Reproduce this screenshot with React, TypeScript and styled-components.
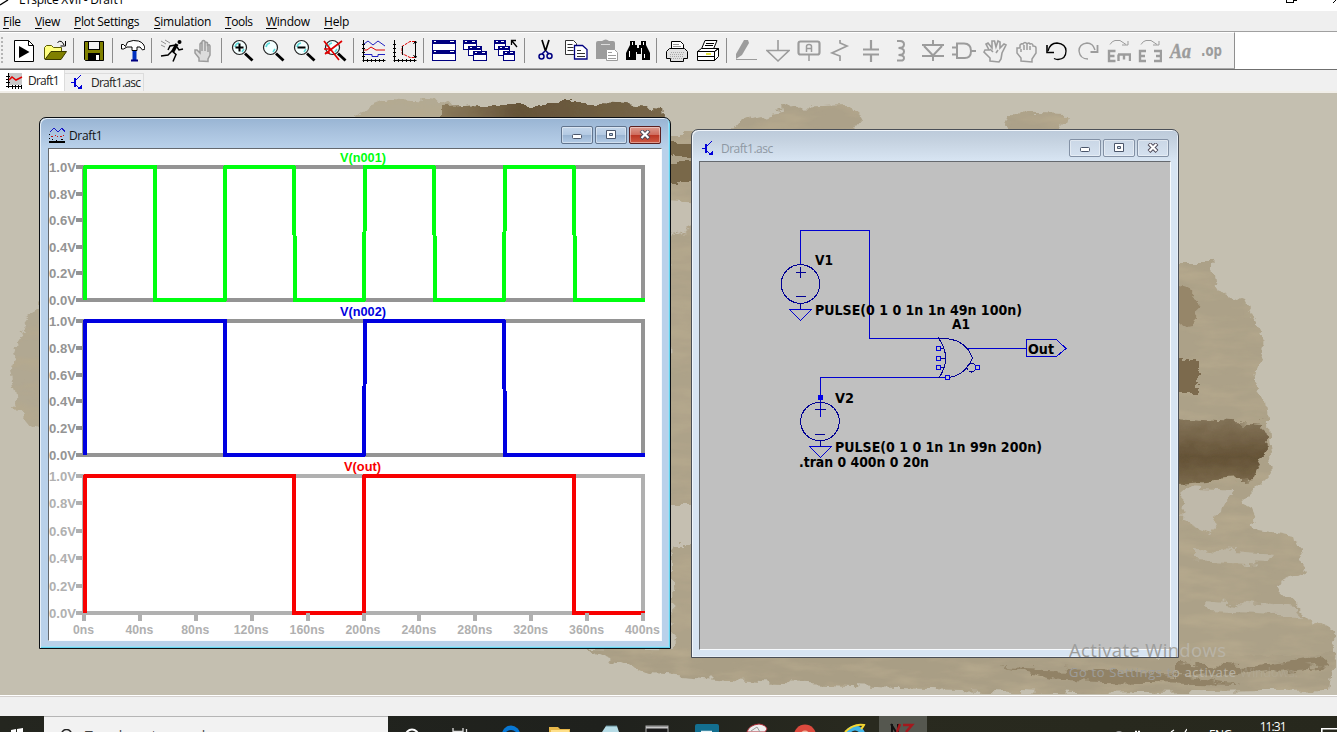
import React from "react";
import styled, { createGlobalStyle } from "styled-components";

const UI = `"Open Sans", "Noto Sans", sans-serif`;

const GlobalStyle = createGlobalStyle`
  * { box-sizing: border-box; }
  html, body { margin: 0; padding: 0; overflow: hidden; }
  body { font-family: ${UI}; font-size: 12px; color: #000; }
  svg { display: block; flex: none; }
`;

const Screen = styled.div`
  width: 1337px;
  height: 732px;
  display: flex;
  flex-direction: column;
  overflow: hidden;
  background: #f0f0f0;
`;

const TitleBar = styled.header`
  height: 11px;
  display: flex;
  justify-content: space-between;
  background: #fff;
  overflow: hidden;
`;
const TitleLeft = styled.div`
  display: flex;
  gap: 8px;
`;
const TitleText = styled.span`
  line-height: 16px;
  margin-top: -8px;
  letter-spacing: -0.28px;
  white-space: nowrap;
`;

const MenuBar = styled.nav`
  height: 20px;
  display: flex;
  align-items: center;
  padding-left: 3px;
  background: #efefef;
`;
const MenuItem = styled.span<{ $w: number; $ls: number }>`
  width: ${(p) => p.$w}px;
  letter-spacing: ${(p) => p.$ls}px;
  line-height: 18px;
  padding-top: 1px;
  white-space: nowrap;
`;
const Key = styled.u`
  text-underline-offset: 2px;
`;

const ToolStrip = styled.div`
  height: 39px;
  display: flex;
  background: #fff;
  border-top: 1px solid #a0a0a0;
  border-bottom: 1px solid #6f6f6f;
`;
const Tools = styled.div`
  width: 1235px;
  display: flex;
  align-items: center;
  padding-left: 1px;
  background: #f0f0f0;
  border-top: 1px solid #fff;
  border-right: 1px solid #8f8f8f;
  border-bottom: 1px solid #a8a8a8;
`;
const Grip = styled.div`
  width: 7px;
  height: 28px;
  background: repeating-linear-gradient(#b4b4b4 0 2px, transparent 2px 4px) no-repeat 0 0 / 2px 100%;
`;
const Tool = styled.div`
  width: 31px;
  height: 30px;
  padding-left: 4px;
  display: flex;
  align-items: center;
`;
const Separator = styled.div`
  width: 8px;
  height: 25px;
  background: linear-gradient(#8c8c8c, #8c8c8c) no-repeat 3px 0 / 1px 100%;
`;

const TabRow = styled.div`
  height: 23px;
  display: flex;
  align-items: flex-start;
  background: #f0f0f0;
  border-bottom: 2px solid #f1eee8;
`;
const Tab = styled.div<{ $active?: boolean; $w: number }>`
  width: ${(p) => p.$w}px;
  height: ${(p) => (p.$active ? 21 : 18)}px;
  margin-top: ${(p) => (p.$active ? 0 : 3)}px;
  padding-left: ${(p) => (p.$active ? 6 : 5)}px;
  display: flex;
  align-items: center;
  gap: ${(p) => (p.$active ? 5 : 7)}px;
  background: ${(p) => (p.$active ? "#fff" : "#f1f1f1")};
  border: solid #dcdcdc;
  border-width: ${(p) => (p.$active ? "0 1px 0 0" : "1px 1px 0 0")};
  letter-spacing: ${(p) => (p.$active ? -0.75 : -0.75)}px;
  white-space: nowrap;
  color: #222;
`;

const Desktop = styled.main`
  position: relative;
  height: 602px;
  background: #c4bfb0;
  overflow: hidden;
`;
const Wallpaper = styled.svg`
  position: absolute;
  inset: 0;
`;

const Frame = styled.section<{ $x: number; $y: number; $w: number; $h: number; $active?: boolean }>`
  position: absolute;
  left: ${(p) => p.$x}px;
  top: ${(p) => p.$y}px;
  width: ${(p) => p.$w}px;
  height: ${(p) => p.$h}px;
  display: flex;
  flex-direction: column;
  padding: ${(p) => (p.$active ? "0 8px 7px 8px" : "0 7px 7px 7px")};
  border: 1px solid ${(p) => (p.$active ? "#0b0f14" : "#4a4f57")};
  border-radius: 7px 7px 0 0;
  background: ${(p) =>
    p.$active
      ? "linear-gradient(#98b4d3 0, #a9c2de 14px, #b9d1ea 30px, #b9d1ea 100%)"
      : "linear-gradient(#bccada 0, #c6d3e1 12px, #d7e4f2 30px, #d7e4f2 100%)"};
  box-shadow: ${(p) =>
    p.$active
      ? "inset 1px 1px 0 #e6eff8, inset -1px -1px 0 #62d2ee, inset -2px -2px 0 #a5dcf2"
      : "inset 1px 1px 0 #f1f6fb, inset -1px -1px 0 #e6eef7"};
`;
const FrameTitle = styled.div<{ $active?: boolean }>`
  height: ${(p) => (p.$active ? 30 : 31)}px;
  display: flex;
  align-items: center;
  padding: ${(p) => (p.$active ? "5px 1px 0 1px" : "6px 2px 0 2px")};
`;
const FrameName = styled.span<{ $active?: boolean }>`
  flex: 1;
  margin-left: 3px;
  letter-spacing: ${(p) => (p.$active ? -0.35 : -0.5)}px;
  color: ${(p) => (p.$active ? "#111" : "#8e98a3")};
`;
const FrameButtons = styled.div`
  display: flex;
  gap: 2px;
  padding-bottom: 1px;
`;
const FrameButton = styled.button<{ $tone: "blue" | "red" | "idle" }>`
  width: 32px;
  height: 18px;
  padding: 0;
  display: flex;
  align-items: center;
  justify-content: center;
  border-radius: 2px;
  border: 1px solid
    ${(p) => (p.$tone === "red" ? "#5b1f20" : p.$tone === "blue" ? "#62758e" : "#8391a5")};
  box-shadow: inset 0 0 0 1px rgba(255, 255, 255, 0.4);
  background: ${(p) =>
    p.$tone === "red"
      ? "linear-gradient(#dc9a8f 0, #cf6d5f 47%, #b93423 50%, #cf5a44 100%)"
      : p.$tone === "blue"
      ? "linear-gradient(#c5d7eb 0, #b4cae3 47%, #98b3d1 50%, #b4cce6 100%)"
      : "linear-gradient(#cad7e6, #d5e1ef)"};
`;
const Client = styled.div<{ $bg: string }>`
  flex: 1;
  overflow: hidden;
  background: ${(p) => p.$bg};
  border: solid;
  border-width: 1px;
  border-color: #65696e #f7fafd #f7fafd #65696e;
`;

const Watermark = styled.aside`
  position: absolute;
  left: 1069px;
  top: 545px;
`;

const StatusBar = styled.footer`
  height: 21px;
  background: #f0f0f0;
  border-top: 1px solid #fff;
  box-shadow: inset 0 1px 0 #d4d0ce;
`;
const Taskbar = styled.div`
  position: relative;
  height: 16px;
  display: flex;
  overflow: hidden;
  background: linear-gradient(90deg, #24261f, #1f211d 45%, #292a1f 65%, #27281d);
`;
const StartButton = styled.div`
  width: 44px;
  padding: 12px 0 0 11px;
`;
const SearchBox = styled.div`
  width: 344px;
  display: flex;
  gap: 12px;
  padding: 12px 0 0 15px;
  background: #f2f2f2;
  border-top: 1px solid #b5b5b5;
  font-size: 14px;
  line-height: 18px;
  letter-spacing: -0.2px;
  white-space: nowrap;
  color: #444;
`;
const SearchLabel = styled.span`
  margin-top: -2px;
`;
const TaskIcons = styled.div`
  width: 539px;
`;
const Tray = styled.div`
  flex: 1;
  display: flex;
  padding-left: 185px;
  color: #fff;
  white-space: nowrap;
`;
const Language = styled.span`
  margin: 11px 28px 0 22px;
  line-height: 16px;
  letter-spacing: -0.6px;
`;
const Clock = styled.span`
  margin-top: 3px;
  width: 61px;
  line-height: 15px;
  letter-spacing: -0.9px;
`;

/* ---------- toolbar icons, each on a 24 x 24 grid ---------- */

const G = "#9c9c9c";
const N = "#000080";

const Lens = ({ children }: { children?: React.ReactNode }) => (
  <>
    <circle cx="9.5" cy="8.5" r="7" fill="#f4ffff" stroke="#222" strokeWidth="1.2" />
    <path d="M5 8a5 5 0 0 1 4-4M12 13l2-3" stroke="#58dada" strokeWidth="1.6" fill="none" />
    <path d="M15 14.5l7.5 7" stroke="#000" strokeWidth="2.8" />
    {children}
  </>
);
const MiniWindow = ({ x, y, w = 13, h = 9 }: { x: number; y: number; w?: number; h?: number }) => (
  <>
    <rect x={x + 0.5} y={y + 0.5} width={w} height={h} fill="#fff" stroke={N} />
    <rect x={x} y={y} width={w + 1} height="4" fill={N} />
    <path d={`M${x + 2} ${y + 1.5}h2M${x + w - 4} ${y + 1.5}h3`} stroke="#fff" />
  </>
);

const icons: Record<string, React.ReactNode> = {
  run: (
    <>
      <path d="M2.5 1.5h14l5 5v16h-19z" fill="#fff" stroke="#000" />
      <path d="M16.5 1.5v5h5" fill="none" stroke="#000" />
      <path d="M7 7v12l10.500-6z" fill="#000" />
    </>
  ),
  open: (
    <>
      <path d="M1.500 20V8.500l2-2h5l2 2h8v4" fill="#ffff80" stroke="#5a5a00" />
      <path d="M2 20.500l6-8h15.500l-5.500 8z" fill="#808000" stroke="#3a3a00" />
      <path d="M14.500 3.500q4-3.500 6.500 2.500M22.500 2v5h-5" fill="none" stroke="#000" />
    </>
  ),
  save: (
    <>
      <path d="M2.500 2.500h19v19h-18l-1-1z" fill="#808000" stroke="#000" />
      <rect x="6.500" y="2.500" width="11" height="8" fill="#f0f0f0" stroke="#000" />
      <rect x="6" y="14" width="12" height="7" fill="#000" />
      <rect x="14" y="16" width="3" height="5" fill="#fff" />
    </>
  ),
  hammer: (
    <>
      <path d="M.5 5.500h2l2 2 2-4.500q6-2.500 11-1 6 2 6.500 8l-2.500 1-2.500-3h-3v3.500h-5V8H6l-3.500 2h-2z" fill="#fff" stroke="#000" />
      <path d="M13.500 12v10" stroke="#0030c0" strokeWidth="4" />
      <path d="M10 21.500h7" stroke="#000080" strokeWidth="2" />
    </>
  ),
  runner: (
    <>
      <circle cx="19.500" cy="3" r="2" fill="#000" />
      <path d="M12 12l4 3.500-3 7M12 12l-4 4-7 1M16 6l-6 1-2 4M17 8l2 3 4-1" fill="none" stroke="#000" strokeWidth="1.500" />
      <path d="M17 5l-4.500 8" stroke="#000" strokeWidth="3.500" />
      <path d="M1 2l5 3M1 6l4 2M5 1l5 3" stroke="#909090" />
    </>
  ),
  halt: (
    <path
      d="M8 22v-3l-4-5v-3h2l3 3V5q1-2 2 0V2.500q1.500-2 3 0V4q1.500-1.500 2.500 0v2q2-1 2.500 1v9l-2 4v2.500zM11 5v7M14 4v8M17 6v7"
      fill="#dcdcdc"
      stroke={G}
      strokeWidth="1.500"
    />
  ),
  zoomIn: <Lens><path d="M5.500 8.500h8M9.500 4.500v8" stroke="#000" strokeWidth="2" /></Lens>,
  pan: <Lens />,
  zoomOut: <Lens><path d="M5.500 8.500h8" stroke="#000" strokeWidth="2" /></Lens>,
  zoomFit: <Lens><path d="M1 2l15 19M19 2L2 15M1 10h8M2 14l5 0" stroke="#e00000" strokeWidth="1.700" /></Lens>,
  autorange: (
    <>
      <path d="M1.500 1v22M.5 21.500h23M5.500 20v3M9.500 20v3M13.500 20v3M17.500 20v3M21.500 20v3M0 5.500h3M0 9.500h3M0 13.500h3M0 17.500h3" stroke="#000" />
      <path d="M2 5l4-3 5 4 5-4 7 5" fill="none" stroke="#2020c0" />
      <path d="M2 11h3l4-3 5 3h9" fill="none" stroke="#e00000" />
      <path d="M2 15.500h8v2h6v-2h7" fill="none" stroke="#2020c0" />
    </>
  ),
  plotRange: (
    <>
      <path d="M1.500 1v22M.5 21.500h23M5.500 20v3M9.500 20v3M13.500 20v3M17.500 20v3M21.500 20v3M0 5.500h3M0 9.500h3M0 13.500h3M0 17.500h3" stroke="#000" />
      <path d="M22 2.500h-5l-8 5v7l8 4h5" fill="none" stroke="#e00000" strokeDasharray="3 1" />
      <path d="M22.500 2v17M20.500 5l2-3 1 2M20.500 16l2 3 1-2M9.500 7v9" fill="none" stroke="#000" />
    </>
  ),
  tile: (
    <>
      <rect x=".5" y="1.500" width="23" height="20" fill="#fff" stroke={N} />
      <path d="M0 3h24M0 13h24" stroke={N} strokeWidth="4" />
      <path d="M2 2.500h2M18 2.500h4M2 12.500h2M18 12.500h4" stroke="#fff" />
    </>
  ),
  cascade: <><MiniWindow x={0} y={1} /><MiniWindow x={5} y={7} /><MiniWindow x={10} y={12} /></>,
  closeAll: (
    <>
      <MiniWindow x={0} y={1} w={11} />
      <MiniWindow x={4} y={7} w={11} />
      <MiniWindow x={9} y={12} w={11} />
      <path d="M23 8l-5-6M17.500 6V1.500H22" fill="none" stroke="#000" strokeWidth="1.300" />
    </>
  ),
  cut: (
    <>
      <path d="M9 1l3.500 11M16 1l-3.500 11" stroke="#000" strokeWidth="1.700" />
      <path d="M12 12l-3 3M13 12l3 3" stroke={N} strokeWidth="1.500" />
      <circle cx="8.500" cy="17.500" r="2.500" fill="none" stroke={N} strokeWidth="1.500" />
      <circle cx="16.500" cy="17" r="2.500" fill="none" stroke={N} strokeWidth="1.500" />
    </>
  ),
  copy: (
    <>
      <path d="M1.500 1.500h8l3 3v11h-11z" fill="#fff" stroke="#333" />
      <path d="M3.500 5.500h5M3.500 8.500h6M3.500 11.500h6" stroke="#333" />
      <path d="M10.500 6.500h8l4.500 4v9.500h-12.500z" fill="#fff" stroke={N} strokeWidth="1.300" />
      <path d="M13 11.500h4M13 14.500h8M13 17.500h8" stroke="#333" />
    </>
  ),
  paste: (
    <>
      <path d="M1 4q0-2 2-2h4q4-3 7 0h4q2 0 2 2v16H1z" fill={G} />
      <path d="M6 5.500h9" stroke="#ddd" />
      <path d="M11.500 10.500h8l3 3v8h-11z" fill="#fff" stroke={G} />
      <path d="M13 13.500h4M13 16.500h8M13 19.500h8" stroke={G} />
    </>
  ),
  find: (
    <>
      <path d="M4 2h5v4h2v3h2V6h2V2h5v4l4 8v7h-8v-8h-1v2h-4v-2h-1v8H0v-7l4-8z" fill="#000" />
      <path d="M6.500 3v3M17.500 3v3M3.500 12v6M15.500 9v4M18.500 15v4" stroke="#fff" />
    </>
  ),
  print: (
    <>
      <path d="M6.500 9V2.500h9l3 3V9" fill="#fff" stroke="#000" />
      <path d="M4.500 9.500h15l3 3v7h-4v3h-13v-3h-4v-7z" fill="#e2e2e2" stroke="#000" />
      <path d="M6 13.500h13M5 15.500h14M5 17.500h14M6 19.500h12" stroke="#aaa" strokeDasharray="1 1" />
      <path d="M8 5.500h6M8 7.500h8" stroke="#999" />
    </>
  ),
  printSetup: (
    <>
      <path d="M5.500 10l3.500-8.500h12L17.500 10" fill="#fff" stroke="#000" />
      <path d="M10 4.500h8M9 6.500h8" stroke="#000" />
      <path d="M1.500 12.500l4-3h17l-4 3zM1.500 12.500v9h17v-9zM18.500 12.500l4-3v8l-4 4z" fill="#fff" stroke="#000" />
      <path d="M1 17.500h17" stroke="#000" />
      <path d="M10 15h5" stroke="#d8d800" strokeWidth="1.500" />
    </>
  ),
  wire: (
    <>
      <path d="M1 20v-5L9 1h4l1 3-7 12z" fill={G} />
      <path d="M1 20.500h21" stroke={G} />
    </>
  ),
  ground: <path d="M12 1v11M1 11.500h22L12 22z" fill="none" stroke={G} strokeWidth="1.600" />,
  label: (
    <>
      <rect x="1.500" y="2.500" width="21" height="13" rx="2" fill="none" stroke={G} strokeWidth="2.200" />
      <path d="M12 16v6M9.500 13V7.500q0-2 2.500-2t2.500 2V13M9.500 9.500h5" fill="none" stroke={G} strokeWidth="1.500" />
    </>
  ),
  resistor: <path d="M12 1v3l7 3-15 7 8 3v5" fill="none" stroke={G} strokeWidth="1.700" />,
  capacitor: <path d="M12 1v9M4 10.500h16M4 15.500h16M12 15v8" fill="none" stroke={G} strokeWidth="2.200" />,
  inductor: <path d="M7 2h3q4 0 4 3.500T8.500 9q5.500 0 5.500 3.500T8.500 16q5.500 0 5.500 3t-4 2.500H7" fill="none" stroke={G} strokeWidth="2" />,
  diode: <path d="M12 1v5M1 6h22M3 7l9 9.500 9-9.500M1 17h22M12 17v5" fill="none" stroke={G} strokeWidth="2" />,
  component: (
    <path d="M5 4.500h7q7 0 7 7.500t-7 7H5zM0 8.500h5M0 15.500h5M19 12h5" fill="none" stroke={G} strokeWidth="2" />
  ),
  move: (
    <path
      d="M7 22v-3l-6-6 1-2h4L3 5l2-1 4 5V2h2.500l1.500 6 2-6 2 1v6l4-4 2 1-4 8-1 6-2 3zM7 10l3 3M15 11l-2 3"
      fill="none"
      stroke={G}
      strokeWidth="1.600"
    />
  ),
  drag: (
    <path
      d="M7 22v-3l-4-5V9h3V6q2-2 3-1 2-3 4 0 2-2 3 0 3-1 3 2 3 0 3 2v5l-4 6v3zM7 10v3M10 6v5M13 5v6M16 7v4"
      fill="none"
      stroke={G}
      strokeWidth="1.500"
    />
  ),
  undo: (
    <>
      <path d="M3 12q2-8 9-8 9 1 9 8 0 8-8 8.500-2 0-4-1" fill="none" stroke="#000" strokeWidth="1.300" />
      <path d="M2 6v7.500h7" fill="none" stroke="#000" strokeWidth="1.600" />
    </>
  ),
  redo: (
    <>
      <path d="M19 11q-2-7-8-7-8 1-8 8 1 8 9 8" fill="none" stroke={G} strokeWidth="1.400" />
      <path d="M21.500 6v7h-7" fill="none" stroke={G} strokeWidth="1.800" />
    </>
  ),
  rotate: (
    <>
      <path d="M8.500 12H2V22h6.500M2 17h5.500M11 15.500H23V22M17 15.500v5M11.500 15.500V22" fill="none" stroke={G} strokeWidth="2.400" />
      <path d="M3 5.500q2-3.500 5-4h5l6 4M15 6h6V2" fill="none" stroke={G} />
    </>
  ),
  mirror: (
    <>
      <path d="M8 12H2V22h6M2 17h5M16 12h7V22h-7M23 17h-5" fill="none" stroke={G} strokeWidth="2.400" />
      <path d="M3 5.500q2-3.500 5-4h5l6 4M15 6h6V2" fill="none" stroke={G} />
    </>
  ),
  text: (
    <text
      x="1"
      y="19"
      textLength="21"
      lengthAdjust="spacingAndGlyphs"
      fontFamily="Liberation Serif, serif"
      fontSize="20"
      fontStyle="italic"
      fontWeight="bold"
      fill={G}
      stroke={G}
      strokeWidth=".4"
    >
      Aa
    </text>
  ),
  directive: (
    <text x="1" y="17" textLength="21" lengthAdjust="spacingAndGlyphs" fontFamily="DejaVu Sans, sans-serif" fontSize="15" fontWeight="bold" fill={G}>
      .op
    </text>
  ),
};

const toolOrder =
  "run open | save | hammer | runner halt | zoomIn pan zoomOut zoomFit | autorange plotRange | tile cascade closeAll | cut copy paste find | print printSetup | wire ground label resistor capacitor inductor diode component move drag undo redo rotate mirror text directive".split(
    " "
  );

const menu: [string, number, number][] = [
  ["File", 32, -0.3],
  ["View", 39, -0.3],
  ["Plot Settings", 80, -0.32],
  ["Simulation", 71, -0.25],
  ["Tools", 41, -0.45],
  ["Window", 58, -0.25],
  ["Help", 40, -0.2],
];

const WaveIcon = () => (
  <svg width="17" height="16" viewBox="0 0 17 16">
    <rect x="3" y="0" width="13" height="12" fill="#c8c8c8" />
    <path d="M2.500 0v15M0 13.500h16M0 3.500h4M0 6.500h4M0 9.500h4M6.500 12v4M9.500 12v4M12.500 12v4M15.500 12v4" stroke="#000" />
    <path d="M3 7l3-3 4 3 6-3" fill="none" stroke="#e00000" strokeWidth="1.500" />
  </svg>
);
const PlotIcon = () => (
  <svg width="17" height="16" viewBox="0 0 17 16" shapeRendering="crispEdges">
    <path d="M1 4l4-4 4 4 4-4 3 4" fill="none" stroke="#1818c8" />
    <path d="M2 8.500h2M6 7.500h1M8 8.500h1M11 8.500h2M14 7.500h1" fill="none" stroke="#d01010" strokeWidth="1.500" />
    <path d="M0 6.500h1M0 10.500h1M3 11.500h1M7 12.500h1M12 11.500h2" stroke="#000" />
    <path d="M0 14h16" stroke="#000" strokeWidth="2" />
  </svg>
);
const TransistorIcon = () => (
  <svg width="12" height="16" viewBox="0 0 12 16" shapeRendering="crispEdges">
    <path d="M0 7.500h4M4 6l6-6M4 9l5 5" stroke="#0000d8" fill="none" />
    <path d="M4 3v9" stroke="#0000d8" strokeWidth="2" />
    <path d="M6 14h5v-4z" fill="#0000d8" />
  </svg>
);

const MinimizeGlyph = () => (
  <svg width="12" height="10" viewBox="0 0 12 10">
    <rect x="1.500" y="4.500" width="9" height="4" rx="1" fill="#fff" stroke="#4b566b" />
  </svg>
);
const MaximizeGlyph = () => (
  <svg width="12" height="10" viewBox="0 0 12 10">
    <path d="M1.500 .5h9v8H1.500zM4.500 3.500v2h3v-2z" fill="#fff" fillRule="evenodd" stroke="#4b566b" />
  </svg>
);
const CloseGlyph = () => (
  <svg width="12" height="10" viewBox="0 0 12 10">
    <path d="M2 .5l8 8M10 .5l-8 8" stroke="#4b4656" strokeWidth="4" />
    <path d="M2.500 1l7 7M9.500 1l-7 7" stroke="#fff" strokeWidth="2.200" />
  </svg>
);

/* ---------- waveform panes ---------- */

type Pane = {
  name: string;
  nameX: number;
  nameW: number;
  levels: number[];
  color: string;
  axis: string;
  trace: string;
};
const panes: Pane[] = [
  {
    name: "V(n001)",
    nameX: 340,
    nameW: 46,
    levels: [167, 194, 220, 247, 273, 300],
    color: "#00ff10",
    axis: "#949494",
    trace: "M85 300V167H155V300H225V167H294L295 300H364L365 167H434L435 300H504L505 167H574L575 300H645",
  },
  {
    name: "V(n002)",
    nameX: 340,
    nameW: 46,
    levels: [321, 348, 375, 401, 428, 455],
    color: "#0000e0",
    axis: "#949494",
    trace: "M85 455V321H225V455H364L365 321H504L505 455H645",
  },
  {
    name: "V(out)",
    nameX: 344,
    nameW: 37,
    levels: [476, 503, 531, 558, 586, 613],
    color: "#f80000",
    axis: "#b0b0b0",
    trace: "M85 613V476H294V613H364V476H574V613H645",
  },
];

const Waveforms = () => (
  <svg width="613" height="491" viewBox="49 149 613 491" fontFamily="Liberation Sans, Arial, sans-serif" fontWeight="bold" fontSize="13.500">
    {panes.map((p) => (
      <g key={p.name}>
        <g stroke={p.axis} strokeWidth="4" shapeRendering="crispEdges" fill="none">
          <rect x="84" y={p.levels[0]} width="559" height={p.levels[5] - p.levels[0]} />
          {p.levels.map((y) => (
            <path key={y} d={`M76 ${y}H84`} />
          ))}
        </g>
        {p.levels.map((y, i) => (
          <text key={y} x="49" y={y + 5} textLength="27" lengthAdjust="spacingAndGlyphs" fill={p.axis}>
            {(1 - i * 0.2).toFixed(1)}V
          </text>
        ))}
        <path d={p.trace} fill="none" stroke={p.color} strokeWidth="4" strokeLinejoin="round" shapeRendering="crispEdges" />
        <text x={p.nameX} y={p.levels[0] - 5} textLength={p.nameW} lengthAdjust="spacingAndGlyphs" fill={p.color}>
          {p.name}
        </text>
      </g>
    ))}
    {Array.from({ length: 11 }, (_, i) => (
      <g key={i} fill="#b0b0b0">
        <rect x={82 + i * 55.9} y="613" width="4" height="8" shapeRendering="crispEdges" />
        <text
          x={83.500 + i * 55.9}
          y="634"
          textAnchor="middle"
          textLength={i === 0 ? 21 : i < 3 ? 28 : 35}
          lengthAdjust="spacingAndGlyphs"
        >
          {i * 40}ns
        </text>
      </g>
    ))}
  </svg>
);

/* ---------- schematic ---------- */

const Label = ({ x, y, w, children }: { x: number; y: number; w: number; children: string }) => (
  <text x={x} y={y} textLength={w} lengthAdjust="spacingAndGlyphs">
    {children}
  </text>
);
const Pin = ({ x, y }: { x: number; y: number }) => (
  <rect x={x - 2} y={y - 2} width="4" height="4" fill="#c0c0c0" stroke="#0000e0" shapeRendering="crispEdges" />
);

const Schematic = () => (
  <svg
    width="469"
    height="487"
    viewBox="700 162 469 487"
    fontFamily="DejaVu Sans Condensed, DejaVu Sans, sans-serif"
    fontSize="14"
    fontWeight="bold"
  >
    <g fill="none" stroke="#0000d0" shapeRendering="crispEdges">
      <path d="M800.500 264V230.500H869.500V338.500H940M820.500 417V377.500H948M966 348.500H1026" />
      <path d="M789.500 309.500H811.500L800.500 320.500zM809.500 446.500H831.500L820.500 457.500z" />
      <path d="M1026.500 339.500H1056.500L1066 348.500L1056.500 356.500H1026.500z" />
    </g>
    <g fill="none" stroke="#000094" shapeRendering="crispEdges">
      <circle cx="800.500" cy="284" r="19.300" />
      <circle cx="820" cy="421.500" r="19.300" />
      <path d="M796 272.500h10M800.500 267v11M795.500 296.500h10M800.500 303v6M815 409.500h11M815 434.500h10M820.500 441v6" />
      <path d="M938 337.500Q953 358 938.500 378.500M938 338.500C955 337.500 967 343 972.500 358C967 371 959 376 949 377.500" />
      <circle cx="971.500" cy="367.500" r="4.500" />
      <path d="M940 348.500h4M940 358.500h6M940 367.500h4" />
    </g>
    <Pin x={938.500} y={348.500} />
    <Pin x={938.500} y={358.500} />
    <Pin x={938.500} y={367.500} />
    <Pin x={947.500} y={377.500} />
    <Pin x={977.500} y={367.500} />
    <rect x="818" y="395" width="5" height="5" fill="#0000e8" />
    <Label x={815} y={265} w={18}>V1</Label>
    <Label x={815} y={315} w={207}>PULSE(0 1 0 1n 1n 49n 100n)</Label>
    <Label x={952} y={329} w={18}>A1</Label>
    <Label x={1028} y={354} w={26}>Out</Label>
    <Label x={835} y={403} w={19}>V2</Label>
    <Label x={835} y={452} w={207}>PULSE(0 1 0 1n 1n 99n 200n)</Label>
    <Label x={799} y={467} w={130}>.tran 0 400n 0 20n</Label>
  </svg>
);

/* ---------- painted desktop picture ---------- */

const Painting = () => (
  <Wallpaper width="1337" height="602" viewBox="0 93 1337 602">
    <defs>
      <filter id="rough" x="-5%" y="-5%" width="110%" height="110%">
        <feTurbulence type="fractalNoise" baseFrequency="0.05 0.09" numOctaves="4" seed="8" />
        <feDisplacementMap in="SourceGraphic" scale="16" xChannelSelector="R" yChannelSelector="G" />
      </filter>
      <filter id="bristle" x="0" y="0" width="100%" height="100%">
        <feTurbulence type="fractalNoise" baseFrequency="0.02 0.07" numOctaves="4" seed="3" result="n" />
        <feColorMatrix in="n" values="0 0 0 0 .47  0 0 0 0 .40  0 0 0 0 .27  0 2 0 0 -.78" result="c" />
        <feComposite in="c" in2="SourceAlpha" operator="in" result="t" />
        <feMerge><feMergeNode in="SourceGraphic" /><feMergeNode in="t" /></feMerge>
      </filter>
      <linearGradient id="umber" x1="0" x2="1">
        <stop offset="0" stopColor="#8c7b5c" /><stop offset=".35" stopColor="#655338" /><stop offset="1" stopColor="#776648" />
      </linearGradient>
      <linearGradient id="shade" x1="0" x2="0" y1="0" y2="1">
        <stop offset="0" stopColor="#85755a" /><stop offset=".6" stopColor="#645236" /><stop offset="1" stopColor="#7b6a4c" />
      </linearGradient>
    </defs>
    <g filter="url(#bristle)">
      <g filter="url(#rough)">
        <path d="M348 122L372 105L390 98L450 103L440 122z" fill="#b3aa93" />
        <path d="M46 295L22 330L10 365L16 405L32 425L46 432z" fill="#b1a892" />
        <path d="M728 135L744 118L790 108L854 106L862 120L850 135zM1000 134L1008 113L1064 115L1058 134z" fill="#aca189" />
        <path d="M666 135H700V660H672z" fill="#ada289" />
        <path d="M1174 262L1212 262L1216 290L1244 300L1266 345L1252 382L1266 400L1272 470L1244 498L1258 530L1296 536L1304 570L1274 585L1308 618L1334 632L1336 672L1174 690z" fill="#aca188" />
        <path d="M585 648L700 650L1180 655L1335 655L1330 690L1080 694L900 688L760 682L650 674z" fill="#a99e85" />
      </g>
    </g>
    <g filter="url(#rough)">
      <path d="M442 105L480 103L600 103L662 108L664 126H442z" fill="url(#umber)" />
      <path d="M666 144H700V156H666zM666 161H700V181H666z" fill="#79674a" />
      <path d="M664 200L704 202V220L666 240z" fill="#c5bfb1" />
      <path d="M664 502H706V544H664z" fill="#c5bfb1" />
      <path d="M1174 418L1264 424L1266 450L1254 478L1176 484z" fill="url(#shade)" />
      <path d="M1172 358H1199V394H1172z" fill="#7c6b4d" />
      <path d="M1172 285Q1204 285 1194 322L1172 326z" fill="#968669" />
      <path d="M1184 487L1234 490L1209 532L1182 520z" fill="#bfb9aa" />
      <path d="M1194 548L1274 554L1266 564L1194 560zM1204 600L1294 608L1300 616L1210 612z" fill="#bcb5a3" />
      <path d="M1176 663L1240 667L1322 658L1326 666L1240 675L1176 674zM1000 667L1180 675L1240 684L1060 680z" fill="#918266" />
    </g>
  </Wallpaper>
);

const TaskbarIcons = () => (
  <svg width="539" height="16" viewBox="388 716 539 16">
    <rect x="879" y="716" width="48" height="16" fill="#55574f" />
    <circle cx="412" cy="736" r="6.500" fill="none" stroke="#fff" strokeWidth="2" />
    <path d="M453 728v3.500h10V728M466.500 729v3" fill="none" stroke="#ddd" strokeWidth="1.300" />
    <circle cx="511" cy="734.500" r="9" fill="#0878d4" />
    <path d="M506 732q5-4 10 0z" fill="#17232c" />
    <path d="M549 732v-5h9l2 2h10v3z" fill="#e8b84a" />
    <path d="M551 732v-2h18v2z" fill="#ffe08a" />
    <path d="M602 732l4-6h11l2 6z" fill="#b6dce6" />
    <path d="M606 726h11" stroke="#5e8791" />
    <rect x="646" y="726" width="22" height="8" fill="#1a1a1a" stroke="#a8a8a8" />
    <path d="M646 727.500h22" stroke="#c8c8c8" strokeWidth="2" />
    <rect x="695" y="724" width="24" height="12" rx="2" fill="#136f90" />
    <path d="M701 731.500h11" stroke="#e6f2f6" strokeWidth="1.500" />
    <path d="M747 732q2-7 12-8 7 1 8 5l-2 3z" fill="#eee" stroke="#b2323c" />
    <path d="M751 731l6-4 3 5" fill="none" stroke="#999" />
    <circle cx="805" cy="735.500" r="11" fill="#dc4a3e" />
    <circle cx="805" cy="735" r="4.500" fill="#f3b7a0" />
    <circle cx="855" cy="736" r="8" fill="none" stroke="#43b6e8" strokeWidth="5" />
    <path d="M845 732q9-9 19-7-1 2-3 4" fill="none" stroke="#f5d631" strokeWidth="2" />
    <path d="M891 724l5 8M892 724v8M898 724v8" stroke="#111" strokeWidth="2" />
    <path d="M900 724l-3 8M903 725h9l-6 7" fill="none" stroke="#a3181d" strokeWidth="2.500" />
  </svg>
);

export default function App() {
  return (
    <>
      <GlobalStyle />
      <Screen>
        <TitleBar>
          <TitleLeft>
            <svg width="11" height="8" viewBox="0 0 11 8">
              <path d="M0 5L8 0" stroke="#000" strokeWidth="1.400" />
            </svg>
            <TitleText>LTspice XVII - Draft1</TitleText>
          </TitleLeft>
          <svg width="51" height="8" viewBox="1286 0 51 8" shapeRendering="crispEdges">
            <path d="M1286.500 0V2.500H1293.500V0M1294 .5H1296V0" fill="none" stroke="#000" />
            <path d="M1333 3l4-4" stroke="#000" />
          </svg>
        </TitleBar>
        <MenuBar>
          {menu.map(([t, w, ls]) => (
            <MenuItem key={t} $w={w} $ls={ls}>
              <Key>{t[0]}</Key>
              {t.slice(1)}
            </MenuItem>
          ))}
        </MenuBar>
        <ToolStrip>
          <Tools>
            <Grip />
            {toolOrder.map((name, i) =>
              name === "|" ? (
                <Separator key={i} />
              ) : (
                <Tool key={i}>
                  <svg width="24" height="24" viewBox="0 0 24 24" fill="none">
                    {icons[name]}
                  </svg>
                </Tool>
              )
            )}
          </Tools>
        </ToolStrip>
        <TabRow>
          <Tab $active $w={65}>
            <WaveIcon />
            Draft1
          </Tab>
          <Tab $w={79}>
            <svg width="14" height="16" viewBox="-1 0 14 16">
              <TransistorIcon />
            </svg>
            Draft1.asc
          </Tab>
        </TabRow>
        <Desktop>
          <Painting />
          <Frame $active $x={39} $y={24} $w={632} $h={532}>
            <FrameTitle $active>
              <PlotIcon />
              <FrameName $active>Draft1</FrameName>
              <FrameButtons>
                <FrameButton $tone="blue"><MinimizeGlyph /></FrameButton>
                <FrameButton $tone="blue"><MaximizeGlyph /></FrameButton>
                <FrameButton $tone="red"><CloseGlyph /></FrameButton>
              </FrameButtons>
            </FrameTitle>
            <Client $bg="#fff">
              <Waveforms />
            </Client>
          </Frame>
          <Frame $x={691} $y={36} $w={488} $h={529}>
            <FrameTitle>
              <svg width="17" height="16" viewBox="-1 0 17 16">
                <TransistorIcon />
              </svg>
              <FrameName>Draft1.asc</FrameName>
              <FrameButtons>
                <FrameButton $tone="idle"><MinimizeGlyph /></FrameButton>
                <FrameButton $tone="idle"><MaximizeGlyph /></FrameButton>
                <FrameButton $tone="idle"><CloseGlyph /></FrameButton>
              </FrameButtons>
            </FrameTitle>
            <Client $bg="#c0c0c0">
              <Schematic />
            </Client>
          </Frame>
          <Watermark>
            <svg width="260" height="46">
              <defs>
                <linearGradient id="fade" gradientUnits="userSpaceOnUse" x1="0" x2="240" y1="0" y2="0">
                  <stop offset="0" stopColor="#9d9d9b" />
                  <stop offset=".42" stopColor="#9d9d9b" />
                  <stop offset=".46" stopColor="#bab5a9" />
                  <stop offset="1" stopColor="#b5af9f" />
                </linearGradient>
              </defs>
              <g fill="url(#fade)">
                <text x="0" y="18.500" fontSize="18.500" textLength="157">Activate Windows</text>
                <text x="0" y="39" fontSize="13" textLength="167">Go to Settings to activate</text>
                <text x="171" y="39" fontSize="13" textLength="58" opacity="0.3">Windows.</text>
              </g>
            </svg>
          </Watermark>
        </Desktop>
        <StatusBar />
        <Taskbar>
          <StartButton>
            <svg width="14" height="6" viewBox="0 0 14 6">
              <path d="M0 2l5-1v5H0zM6 1l6-1v6H6z" fill="#fff" />
            </svg>
          </StartButton>
          <SearchBox>
            <svg width="14" height="6" viewBox="0 0 14 6">
              <circle cx="7.500" cy="5.500" r="5" fill="none" stroke="#222" strokeWidth="1.500" />
            </svg>
            <SearchLabel>Type here to search</SearchLabel>
          </SearchBox>
          <TaskIcons>
            <TaskbarIcons />
          </TaskIcons>
          <Tray>
            <svg width="75" height="16" viewBox="1112 716 75 16">
              <circle cx="1119" cy="735" r="4" fill="#999" />
              <path d="M1135 731.500h2M1138 731.500h2M1171 732l3-2M1185 732l2-3" stroke="#fff" strokeWidth="1.300" />
            </svg>
            <Language>ENG</Language>
            <Clock>11:31</Clock>
            <svg width="16" height="16" viewBox="0 0 16 16">
              <path d="M.8 16V12.800H16" fill="none" stroke="#fff" strokeWidth="1.600" />
            </svg>
          </Tray>
        </Taskbar>
      </Screen>
    </>
  );
}
